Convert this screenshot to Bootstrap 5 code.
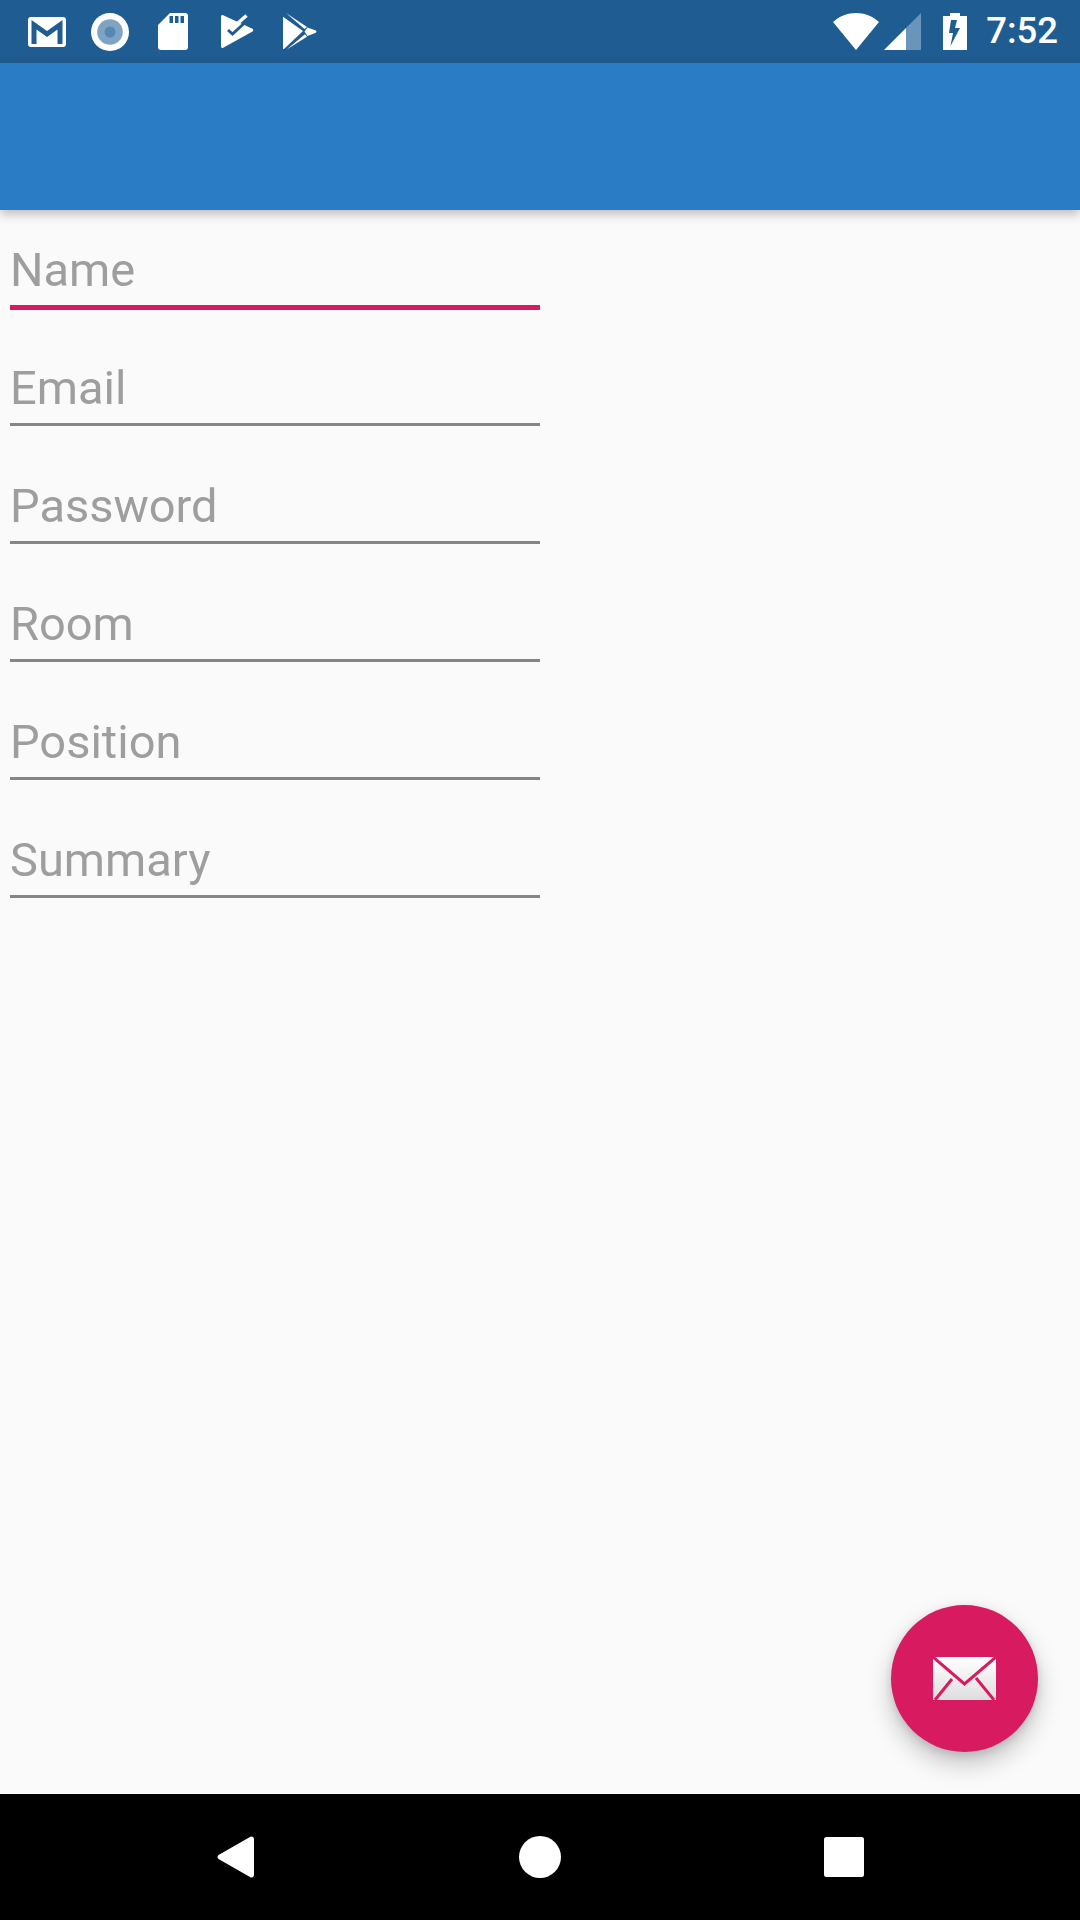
<!DOCTYPE html>
<html lang="en">
<head>
    <meta charset="UTF-8">
    <meta name="viewport" content="width=device-width, initial-scale=1.0">
    <title>Contact form</title>
    <link href="https://cdn.jsdelivr.net/npm/bootstrap@5.3.3/dist/css/bootstrap.min.css" rel="stylesheet">
    <style>
        body {
            width: 1080px;
            height: 1920px;
            background-color: #fafafa;
            font-family: Roboto, "Liberation Sans", sans-serif;
            overflow: hidden;
        }
        .status-bar {
            height: 63px;
            background-color: #1f5c91;
            padding: 0 22px 0 28px;
        }
        .ic-circle { margin-left: 25px; }
        .ic-sd { margin-left: 29px; }
        .ic-tick { margin-left: 33px; }
        .ic-play { margin-left: 29px; }
        .ic-signal { margin-left: 5px; }
        .ic-battery { margin-left: 22px; }
        .clock {
            font-size: 36.5px;
            font-weight: 500;
            line-height: 1;
            color: #fff;
            margin-left: 19px;
        }
        .app-bar {
            height: 147px;
            background-color: #2a7dc5;
            box-shadow: 0 4px 10px rgba(0,0,0,0.25);
            z-index: 2;
        }
        .form-area { width: 530px; margin-left: 10px; will-change: transform; }
        .field {
            height: 98px;
            margin-bottom: 20px;
            border-bottom: 3px solid #858585;
            padding-bottom: 8px;
        }
        .field.is-focused {
            height: 100px;
            margin-bottom: 18px;
            border-bottom: 5px solid #d81b60;
        }
        .field-label {
            font-size: 47px;
            line-height: 54px;
            color: #9e9e9e;
        }
        .fab {
            position: absolute;
            left: 891px;
            top: 1605px;
            width: 147px;
            height: 147px;
            border-radius: 50%;
            border: 0;
            padding: 0;
            background-color: #d81b60;
            box-shadow: 0 12px 24px rgba(0,0,0,0.22), 0 3px 8px rgba(0,0,0,0.12);
        }
        .envelope { filter: blur(0.6px); }
        .nav-bar { height: 126px; background-color: #000; }
        .nav-back { margin-left: 217px; }
        .nav-home { margin-left: 265px; }
        .nav-recent { margin-left: 263px; }
    </style>
</head>
<body class="d-flex flex-column position-relative">

<div class="status-bar d-flex align-items-center justify-content-between flex-shrink-0">
    <div class="d-flex align-items-center">
        <!-- gmail -->
        <svg width="38" height="30" viewBox="0 0 38 30">
            <rect x="0" y="0" width="38" height="30" rx="3" fill="#fff"/>
            <path d="M3.500 3 L19 14 L34.500 3 V27 H29.500 V12.500 L19 20 L8.500 12.500 V27 H3.500 Z" fill="#1f5c91"/>
        </svg>
        <!-- circle -->
        <svg class="ic-circle" width="38" height="38" viewBox="0 0 38 38">
            <circle cx="19" cy="19" r="19" fill="#fff"/>
            <circle cx="19" cy="19" r="12.800" fill="#7ea3c3"/>
            <circle cx="19" cy="19" r="5.500" fill="#5588b3"/>
        </svg>
        <!-- sd card -->
        <svg class="ic-sd" width="30" height="37" viewBox="0 0 30 37">
            <path d="M12 0 H27 a3 3 0 0 1 3 3 V34 a3 3 0 0 1 -3 3 H3 a3 3 0 0 1 -3 -3 V12 Z" fill="#fff"/>
            <path d="M11.500 3 h3.500 v7 h-3.500 Z M17 3 h3.500 v7 h-3.500 Z M22.500 3 h3.500 v7 h-3.500 Z" fill="#1f5c91"/>
        </svg>
        <!-- tick -->
        <svg class="ic-tick" width="33" height="35" viewBox="0 0 33 35">
            <path d="M0 2.500 a1.500 1.500 0 0 1 2.200 -1.300 L31.500 14.800 a1.500 1.500 0 0 1 0 2.600 L2.200 33.800 a1.500 1.500 0 0 1 -2.200 -1.300 Z" fill="#fff"/>
            <path d="M7 16 L11.500 20 L23 9.500" fill="none" stroke="#1f5c91" stroke-width="3"/>
            <path d="M13 12.500 L25.500 1.500" fill="none" stroke="#fff" stroke-width="3.500"/>
        </svg>
        <!-- play store -->
        <svg class="ic-play" width="34" height="37" viewBox="0 0 34 37">
            <path d="M0 3.700 L20 18 L1 36 L0 36 Z" fill="#fff"/>
            <path d="M3 0 L24 14 L21.500 16 Z" fill="#fff"/>
            <path d="M3.700 36.500 L22 21.300 L24 23.700 Z" fill="#fff"/>
            <path d="M24.500 14.500 L32.800 17.500 a1.300 1.300 0 0 1 0 2.200 L24.500 23 L21.500 18.500 Z" fill="#fff"/>
        </svg>
    </div>
    <div class="d-flex align-items-center">
        <!-- wifi -->
        <svg width="46" height="37" viewBox="0 0 46 37">
            <path d="M0 9 C13 -3 33 -3 46 9 L23 37 Z" fill="#fff"/>
        </svg>
        <!-- signal -->
        <svg class="ic-signal" width="37" height="37" viewBox="0 0 37 37">
            <path d="M37 0 V37 H22 V15 Z" fill="#6a95ba"/>
            <path d="M22 15 V37 H0 Z" fill="#fff"/>
        </svg>
        <!-- battery -->
        <svg class="ic-battery" width="24" height="37" viewBox="0 0 24 37">
            <path d="M7 0 H17 V3 H24 V37 H0 V3 H7 Z" fill="#fff"/>
            <path d="M14 7 H8 L6 20 H10 L7.500 33 L17 15 H12 Z" fill="#1f5c91"/>
        </svg>
        <span class="clock">7:52</span>
    </div>
</div>

<div class="app-bar flex-shrink-0"></div>

<form class="form-area flex-grow-1">
    <div class="field is-focused d-flex align-items-end"><label class="field-label">Name</label></div>
    <div class="field d-flex align-items-end"><label class="field-label">Email</label></div>
    <div class="field d-flex align-items-end"><label class="field-label">Password</label></div>
    <div class="field d-flex align-items-end"><label class="field-label">Room</label></div>
    <div class="field d-flex align-items-end"><label class="field-label">Position</label></div>
    <div class="field d-flex align-items-end"><label class="field-label">Summary</label></div>
</form>

<button type="button" class="fab d-flex align-items-center justify-content-center">
    <svg class="envelope" width="63" height="43" viewBox="0 0 63 43">
        <defs>
            <linearGradient id="envFill" x1="0" y1="0" x2="0" y2="1">
                <stop offset="0" stop-color="#ffffff"/>
                <stop offset="1" stop-color="#dedede"/>
            </linearGradient>
        </defs>
        <rect width="63" height="43" fill="url(#envFill)"/>
        <path d="M0 0 L31.500 27 L63 0 M2 43 L19 22 M61 43 L43 21" fill="none" stroke="#d81b60" stroke-width="3"/>
    </svg>
</button>

<div class="nav-bar d-flex align-items-center flex-shrink-0">
    <svg class="nav-back" width="37" height="42" viewBox="0 0 37 42">
        <path d="M33 1 a2.500 2.500 0 0 1 4 2 V39 a2.500 2.500 0 0 1 -4 2 L1.500 23 a2.500 2.500 0 0 1 0 -4 Z" fill="#fff"/>
    </svg>
    <svg class="nav-home" width="42" height="42" viewBox="0 0 42 42">
        <circle cx="21" cy="21" r="21" fill="#fff"/>
    </svg>
    <svg class="nav-recent" width="40" height="40" viewBox="0 0 40 40">
        <rect width="40" height="40" rx="2.500" fill="#fff"/>
    </svg>
</div>

<script src="https://cdn.jsdelivr.net/npm/bootstrap@5.3.3/dist/js/bootstrap.bundle.min.js"></script>
</body>
</html>
